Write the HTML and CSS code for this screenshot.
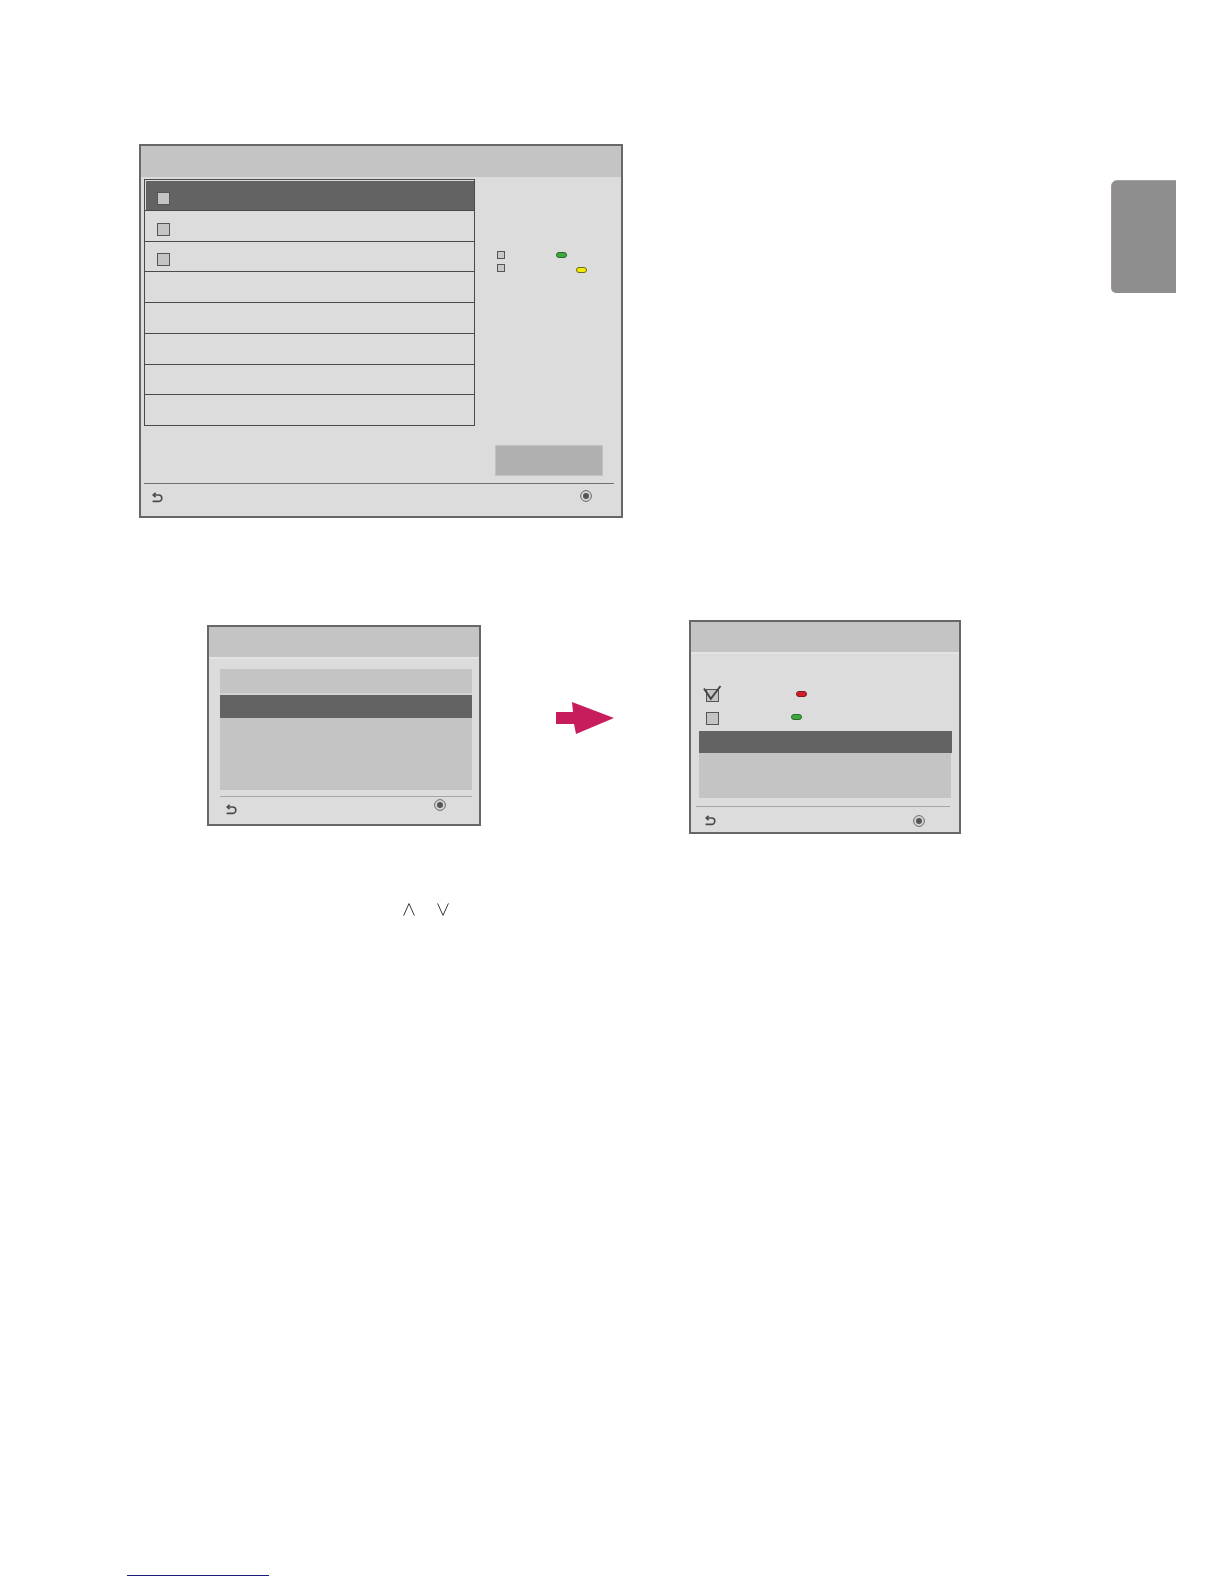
FILE: index.html
```html
<!DOCTYPE html>
<html lang="en">
<head>
<meta charset="utf-8">
<title>Menu screens</title>
<link rel="stylesheet" href="styles.css">
</head>
<body>
<div class="page">
  <div class="row-top">
    <div class="dlg dlg1">
      <div class="d1-title"></div>
      <div class="d1-main">
        <div class="d1-list">
          <div class="d1-row sel"><span class="cb"></span></div>
          <div class="d1-row"><span class="cb"></span></div>
          <div class="d1-row"><span class="cb"></span></div>
          <div class="d1-row"></div>
          <div class="d1-row"></div>
          <div class="d1-row"></div>
          <div class="d1-row"></div>
          <div class="d1-row"></div>
        </div>
        <div class="d1-side">
          <div class="legend lg1"><span class="mini-cb"></span><span class="pill green p1"></span></div>
          <div class="legend lg2"><span class="mini-cb"></span><span class="pill yellow p2"></span></div>
          <div class="d1-btn"></div>
        </div>
      </div>
      <div class="foot d1-foot">
        <svg class="ico-back" width="12" height="11" viewBox="0 0 12 11"><path d="M2.6 3 H7.6 A3.2 3.2 0 0 1 7.6 9.4 H1.6" fill="none" stroke="#4a4a4a" stroke-width="1.6"/><path d="M4.6 0.8 L2.2 3 L4.6 5.2" fill="none" stroke="#4a4a4a" stroke-width="1.6"/></svg>
        <svg class="ico-ok" width="12" height="12" viewBox="0 0 12 12"><circle cx="6" cy="6" r="5.4" fill="#d6d6d6" stroke="#6a6a6a" stroke-width="1"/><circle cx="6" cy="6" r="3" fill="#555"/></svg>
      </div>
    </div>
    <div class="side-tab"></div>
  </div>

  <div class="row-mid">
    <div class="dlg dlg2">
      <div class="sm-title"></div>
      <div class="d2-list">
        <div class="d2-first"></div>
        <div class="d2-sep"></div>
        <div class="d2-sel"></div>
        <div class="d2-rest"></div>
      </div>
      <div class="foot d2-foot">
        <svg class="ico-back" width="12" height="11" viewBox="0 0 12 11"><path d="M2.6 3 H7.6 A3.2 3.2 0 0 1 7.6 9.4 H1.6" fill="none" stroke="#4a4a4a" stroke-width="1.6"/><path d="M4.6 0.8 L2.2 3 L4.6 5.2" fill="none" stroke="#4a4a4a" stroke-width="1.6"/></svg>
        <svg class="ico-ok" width="12" height="12" viewBox="0 0 12 12"><circle cx="6" cy="6" r="5.4" fill="#d6d6d6" stroke="#6a6a6a" stroke-width="1"/><circle cx="6" cy="6" r="3" fill="#555"/></svg>
      </div>
    </div>

    <svg class="arrow" width="59" height="34" viewBox="0 0 59 34"><polygon points="0,11 17,11 16,1 58,17 20,33 18,23 0,23" fill="#c81d5c"/></svg>

    <div class="dlg dlg3">
      <div class="sm-title"></div>
      <div class="d3-opt o1">
        <svg class="cb-checked" width="13" height="13" viewBox="0 0 13 13"><rect x="0.5" y="0.5" width="12" height="12" fill="#c4c4c4" stroke="#555" stroke-width="1"/><path d="M-2 -0.5 L4.8 9.8 L14.5 -3" fill="none" stroke="#444" stroke-width="1.9"/></svg>
        <span class="pill red p3"></span>
      </div>
      <div class="d3-opt o2">
        <span class="cb"></span>
        <span class="pill green p4"></span>
      </div>
      <div class="d3-sel"></div>
      <div class="d3-rest"></div>
      <div class="foot d3-foot">
        <svg class="ico-back" width="12" height="11" viewBox="0 0 12 11"><path d="M2.6 3 H7.6 A3.2 3.2 0 0 1 7.6 9.4 H1.6" fill="none" stroke="#4a4a4a" stroke-width="1.6"/><path d="M4.6 0.8 L2.2 3 L4.6 5.2" fill="none" stroke="#4a4a4a" stroke-width="1.6"/></svg>
        <svg class="ico-ok" width="12" height="12" viewBox="0 0 12 12"><circle cx="6" cy="6" r="5.4" fill="#d6d6d6" stroke="#6a6a6a" stroke-width="1"/><circle cx="6" cy="6" r="3" fill="#555"/></svg>
      </div>
    </div>
  </div>

  <div class="carets">
    <svg class="caret" width="12" height="13" viewBox="0 0 12 13" role="img" aria-label="∧"><polyline points="0.6,12.6 6,0.6 11.4,12.6" fill="none" stroke="#3a3a3a" stroke-width="1"/></svg>
    <svg class="caret down" width="12" height="13" viewBox="0 0 12 13" role="img" aria-label="∨"><polyline points="0.6,0.4 6,12.4 11.4,0.4" fill="none" stroke="#3a3a3a" stroke-width="1"/></svg>
  </div>

  <div class="link-line"></div>
</div>
</body>
</html>
```

FILE: styles.css
```css
html, body {
  margin: 0;
  padding: 0;
  background: #ffffff;
}
body {
  font-family: "Liberation Sans", Arial, sans-serif;
}
.page {
  width: 1224px;
  height: 1584px;
  display: flex;
  flex-direction: column;
  box-sizing: border-box;
}

/* ---------- top row ---------- */
.row-top {
  display: flex;
  align-items: flex-start;
  padding-top: 144px;
  padding-left: 139px;
}
.dlg {
  box-sizing: border-box;
  border: 2px solid #676767;
  background: #dcdcdc;
  display: flex;
  flex-direction: column;
  flex-shrink: 0;
}
.dlg1 {
  width: 484px;
  height: 374px;
}
.d1-title {
  height: 31px;
  background: #c4c4c4;
}
.d1-main {
  height: 306px;
  box-sizing: border-box;
  padding: 2px 7px 0 3px;
  display: flex;
}
.d1-list {
  width: 331px;
  height: 247px;
  box-sizing: border-box;
  border: 1px solid #4a4a4a;
  display: flex;
  flex-direction: column;
}
.d1-row {
  flex: 1;
  border-top: 1px solid #4a4a4a;
  display: flex;
  align-items: flex-end;
  padding-bottom: 5px;
}
.d1-row:first-child {
  border-top: none;
}
.d1-row.sel {
  background: #636363;
  box-shadow: inset 1px 1px 0 #dcdcdc;
}
.cb {
  display: block;
  width: 13px;
  height: 13px;
  box-sizing: border-box;
  border: 1px solid #555;
  background: #c4c4c4;
}
.d1-row .cb {
  margin-left: 12px;
}
.d1-side {
  flex: 1;
  display: flex;
  flex-direction: column;
}
.legend {
  display: flex;
  align-items: center;
  height: 8px;
  margin-left: 22px;
}
.lg1 { margin-top: 72px; }
.lg2 { margin-top: 5px; }
.mini-cb {
  display: block;
  width: 8px;
  height: 8px;
  box-sizing: border-box;
  border: 1px solid #555;
  background: #c8c8c8;
}
.pill {
  display: block;
  width: 11px;
  height: 6px;
  box-sizing: border-box;
  border-radius: 3px;
  border: 1px solid #3d3d3d;
}
.pill.green { background: #3ea83e; border-color: #2b6b2b; }
.pill.yellow { background: #f2ea00; border-color: #6e6a20; }
.pill.red { background: #d21e2a; border-color: #7a1a1e; }
.p1 { margin-left: 51px; }
.p2 { margin-left: 71px; margin-top: 3px; }
.d1-btn {
  margin-top: auto;
  margin-bottom: 7px;
  margin-left: 20px;
  width: 108px;
  height: 31px;
  box-sizing: border-box;
  background: #b0b0b0;
  border: 1px solid #c2c2c2;
}
.foot {
  display: flex;
  justify-content: space-between;
  align-items: flex-start;
  box-sizing: border-box;
}
.d1-foot {
  margin: 0 7px 0 3px;
  border-top: 1px solid #707070;
  height: 33px;
  padding: 0 22px 0 7px;
}
.d1-foot .ico-back { margin-top: 8px; }
.d1-foot .ico-ok { margin-top: 6px; }

.side-tab {
  margin-left: auto;
  margin-right: 48px;
  margin-top: 37px;
  width: 64px;
  height: 112px;
  background: #8e8e8e;
  border-radius: 5px 0 0 5px;
  box-shadow: -1px 0 0 #a8929a, 0 -1px 0 #a8a0a3;
}

/* ---------- middle row ---------- */
.row-mid {
  display: flex;
  align-items: flex-start;
  padding-top: 102px;
  padding-left: 207px;
}
.sm-title {
  height: 30px;
  background: #c4c4c4;
  border-bottom: 2px solid #e3e3e3;
}
.dlg2 {
  width: 274px;
  height: 201px;
  margin-top: 5px;
}
.d2-list {
  margin: 10px 7px 0 11px;
  height: 121px;
  display: flex;
  flex-direction: column;
  background: #c4c4c4;
}
.d2-first { height: 24px; }
.d2-sep { height: 2px; background: #d3d3d3; }
.d2-sel { height: 23px; background: #636363; }
.d2-rest { flex: 1; }
.d2-foot {
  margin: 6px 7px 0 11px;
  border-top: 1px solid #a8a8a8;
  height: 28px;
  padding: 0 26px 0 5px;
}
.d2-foot .ico-back { margin-top: 7px; }
.d2-foot .ico-ok { margin-top: 2px; }

.arrow {
  margin-left: 75px;
  margin-top: 81px;
  flex-shrink: 0;
}

.dlg3 {
  width: 272px;
  height: 214px;
  margin-left: 74px;
}
.d3-opt {
  display: flex;
  align-items: flex-start;
  height: 13px;
  margin-left: 15px;
}
.o1 { margin-top: 35px; }
.o2 { margin-top: 10px; }
.cb-checked {
  display: block;
  overflow: visible;
}
.p3 { margin-left: 77px; margin-top: 2px; }
.p4 { margin-left: 72px; margin-top: 2px; }
.d3-sel {
  margin: 6px 7px 0 8px;
  height: 22px;
  background: #636363;
}
.d3-rest {
  margin: 0 8px 0 8px;
  height: 45px;
  background: #c4c4c4;
}
.d3-foot {
  margin: 8px 9px 0 5px;
  border-top: 1px solid #a8a8a8;
  height: 26px;
  padding: 0 25px 0 8px;
}
.d3-foot .ico-back { margin-top: 8px; }
.d3-foot .ico-ok { margin-top: 8px; }

/* ---------- carets ---------- */
.carets {
  display: flex;
  align-items: flex-start;
  margin-top: 69px;
  padding-left: 403px;
  height: 13px;
}
.caret {
  display: block;
}
.caret.down {
  margin-left: 22px;
}

/* ---------- bottom link ---------- */
.link-line {
  margin-top: auto;
  margin-bottom: 8px;
  margin-left: 127px;
  width: 142px;
  border-bottom: 1px solid #1c1c7c;
}
```
